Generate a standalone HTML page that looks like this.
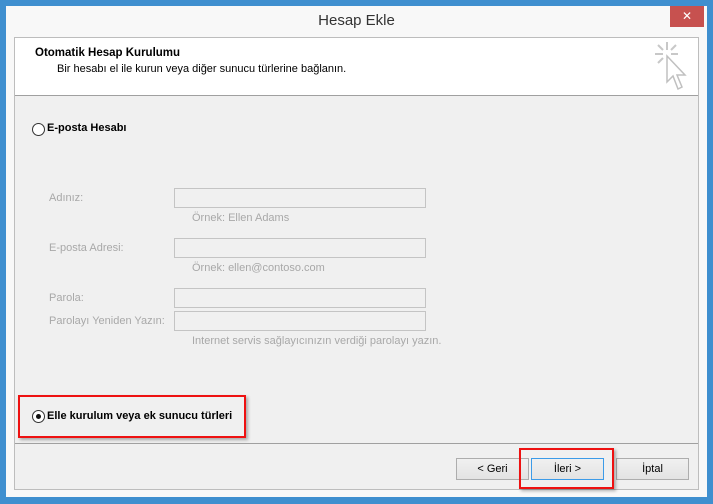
<!DOCTYPE html>
<html><head><meta charset="utf-8"><style>
*{margin:0;padding:0;box-sizing:border-box}
body{width:713px;height:504px;background:#3f8fcf;position:relative;overflow:hidden;font-family:"Liberation Sans",sans-serif;font-size:11px}
.win{position:absolute;left:6px;top:6px;width:701px;height:491px;background:#f8f8f8}
.title{position:absolute;left:0;top:0;width:701px;height:30px;text-align:center;line-height:30px;font-size:15px;color:#333}
.close{position:absolute;left:664px;top:0;width:34px;height:21px;background:#c7514f;color:#fff;text-align:center;line-height:20px;font-size:12px}
.panel{position:absolute;left:14px;top:37px;width:685px;height:453px;border:1px solid #bdbdbd;background:#f0f0f0}
.head{position:absolute;left:0;top:0;width:683px;height:58px;background:#fff;border-bottom:1px solid #a0a0a0}
.a{position:absolute;white-space:nowrap}
.lbl{color:#a8a8a8}
.inp{position:absolute;left:174px;width:252px;height:20px;border:1px solid #c4c4c4;background:#f0f0f0}
.btn{position:absolute;top:458px;width:73px;height:22px;border:1px solid #adadad;background:linear-gradient(#f0f0f0,#e3e3e3);text-align:center;line-height:20px;color:#000}
.red{position:absolute;border:2px solid #ee1111;box-shadow:2px 2px 3px rgba(0,0,0,.3)}
.radio{position:absolute;width:13px;height:13px;border-radius:50%;border:1px solid #333;background:#fff}
</style></head><body>
<div class="win">
<div class="title">Hesap Ekle</div>
<div class="close">✕</div>
</div>
<div class="panel"><div class="head"></div></div>
<div class="a" style="left:35px;top:47px;font-weight:bold;font-size:11.5px">Otomatik Hesap Kurulumu</div>
<div class="a" style="left:57px;top:63px">Bir hesabı el ile kurun veya diğer sunucu türlerine bağlanın.</div>
<svg style="position:absolute;left:650px;top:40px" width="40" height="52" viewBox="0 0 40 52">
<g stroke="#c8c8c8" stroke-width="2">
<line x1="17" y1="2" x2="17" y2="10"/><line x1="5" y1="14" x2="13" y2="14"/><line x1="21" y1="14" x2="28" y2="14"/>
<line x1="8" y1="5" x2="13" y2="10"/><line x1="26" y1="5" x2="21" y2="10"/><line x1="8" y1="23" x2="13" y2="18"/></g>
<path d="M17 16 L17 42 L23 36 L28 49 L32 47 L27 35 L35 35 Z" fill="#fff" stroke="#c0c0c0" stroke-width="1.5"/>
</svg>
<div class="radio" style="left:32px;top:123px"></div>
<div class="a" style="left:47px;top:122px;font-weight:bold">E-posta Hesabı</div>
<div class="a lbl" style="left:49px;top:192px">Adınız:</div>
<div class="inp" style="top:188px"></div>
<div class="a lbl" style="left:192px;top:212px">Örnek: Ellen Adams</div>
<div class="a lbl" style="left:49px;top:242px">E-posta Adresi:</div>
<div class="inp" style="top:238px"></div>
<div class="a lbl" style="left:192px;top:262px">Örnek: ellen@contoso.com</div>
<div class="a lbl" style="left:49px;top:292px">Parola:</div>
<div class="inp" style="top:288px"></div>
<div class="a lbl" style="left:49px;top:315px">Parolayı Yeniden Yazın:</div>
<div class="inp" style="top:311px"></div>
<div class="a lbl" style="left:192px;top:335px">Internet servis sağlayıcınızın verdiği parolayı yazın.</div>
<div class="radio" style="left:32px;top:410px"><div style="position:absolute;left:3px;top:3px;width:5px;height:5px;border-radius:50%;background:#111"></div></div>
<div class="a" style="left:47px;top:410px;font-weight:bold">Elle kurulum veya ek sunucu türleri</div>
<div class="red" style="left:18px;top:395px;width:228px;height:43px"></div>
<div style="position:absolute;left:15px;top:443px;width:683px;height:1px;background:#a0a0a0"></div>
<div class="btn" style="left:456px">&lt; Geri</div>
<div class="btn" style="left:531px;border-color:#3c9be8">İleri &gt;</div>
<div class="btn" style="left:616px">İptal</div>
<div class="red" style="left:519px;top:448px;width:95px;height:41px"></div>
</body></html>
